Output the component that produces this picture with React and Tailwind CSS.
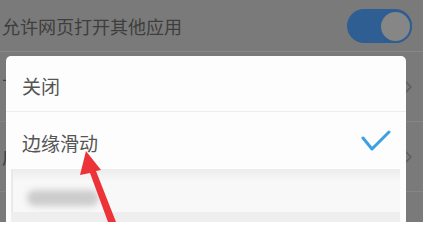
import React from 'react';

const cjk = { fontFamily: '"Noto Sans CJK SC", "Noto Sans", sans-serif' };

const Chevron = () => (
  <svg width="8" height="14" viewBox="0 0 8 14" className="shrink-0">
    <polyline points="1,1 7,7 1,13" fill="none" stroke="#5e5e5e" strokeWidth="1.5" />
  </svg>
);

// only the first few pixels of these rows peek out from behind the dialog
const HiddenRow = ({ label }) => (
  <div className="flex items-center justify-between h-[70px] pl-[2px] pr-[11px] border-b border-[#858585]">
    <div className="w-[5px] overflow-hidden whitespace-nowrap">
      <span className="text-[18px] text-[#3e3e3e]">{label}</span>
    </div>
    <Chevron />
  </div>
);

export default function App() {
  return (
    <div className="relative w-[423px] h-[222px] overflow-hidden bg-[#7a7a7a]" style={cjk}>
      {/* settings page behind the dim */}
      <div className="flex items-center justify-between h-[52px] pl-[2px] pr-[11px] border-b border-[#888888]">
        <span className="text-[18px] leading-none text-[#3e3e3e]">允许网页打开其他应用</span>
        <div className="flex items-center justify-end w-[65px] h-[34px] rounded-full bg-[#2f5e93] mt-[1px]">
          <div className="w-[33px] h-[33px] rounded-full bg-[#868686] border-2 border-[#2f5e93]" />
        </div>
      </div>
      <HiddenRow label="下" />
      <HiddenRow label="广" />

      {/* dialog */}
      <div className="absolute left-[6px] top-[56px] w-[400px] h-[200px] rounded-[5px] bg-[#fdfdfd] overflow-hidden">
        <div className="flex items-center h-[56px] pl-[16px] border-b border-[#eeeeee]">
          <span className="text-[19px] leading-none text-[#555555] mt-[4px]">关闭</span>
        </div>
        <div className="flex items-center justify-between h-[57px] pl-[16px] pr-[15px]">
          <span className="text-[19px] leading-none text-[#555555] mt-[3px]">边缘滑动</span>
          <svg width="30" height="22" viewBox="0 0 30 22">
            <polyline points="2,8 11,19 28,2" fill="none" stroke="#3ba1e4" strokeWidth="3" strokeLinecap="round" strokeLinejoin="round" />
          </svg>
        </div>
        <div className="ml-[5px] mr-[6px] h-[43px] bg-gradient-to-b from-[#ececec] to-[#f8f8f8] to-[30%] pt-[21px] pl-[14px] border-l-2 border-[#e9e9e9]">
          <div className="w-[72px] h-[16px] rounded-full bg-[#cccccc] blur-[3px]" />
        </div>
        <div className="ml-[5px] mr-[6px] h-[20px] bg-[#eeeeee]" />
      </div>

      {/* red arrow annotation */}
      <svg className="absolute left-0 top-0" width="423" height="222" viewBox="0 0 423 222">
        <polygon
          points="86,151 101,170 96,171 116,222 108,222 90,173 80,175"
          fill="#ec3438"
        />
      </svg>
    </div>
  );
}
